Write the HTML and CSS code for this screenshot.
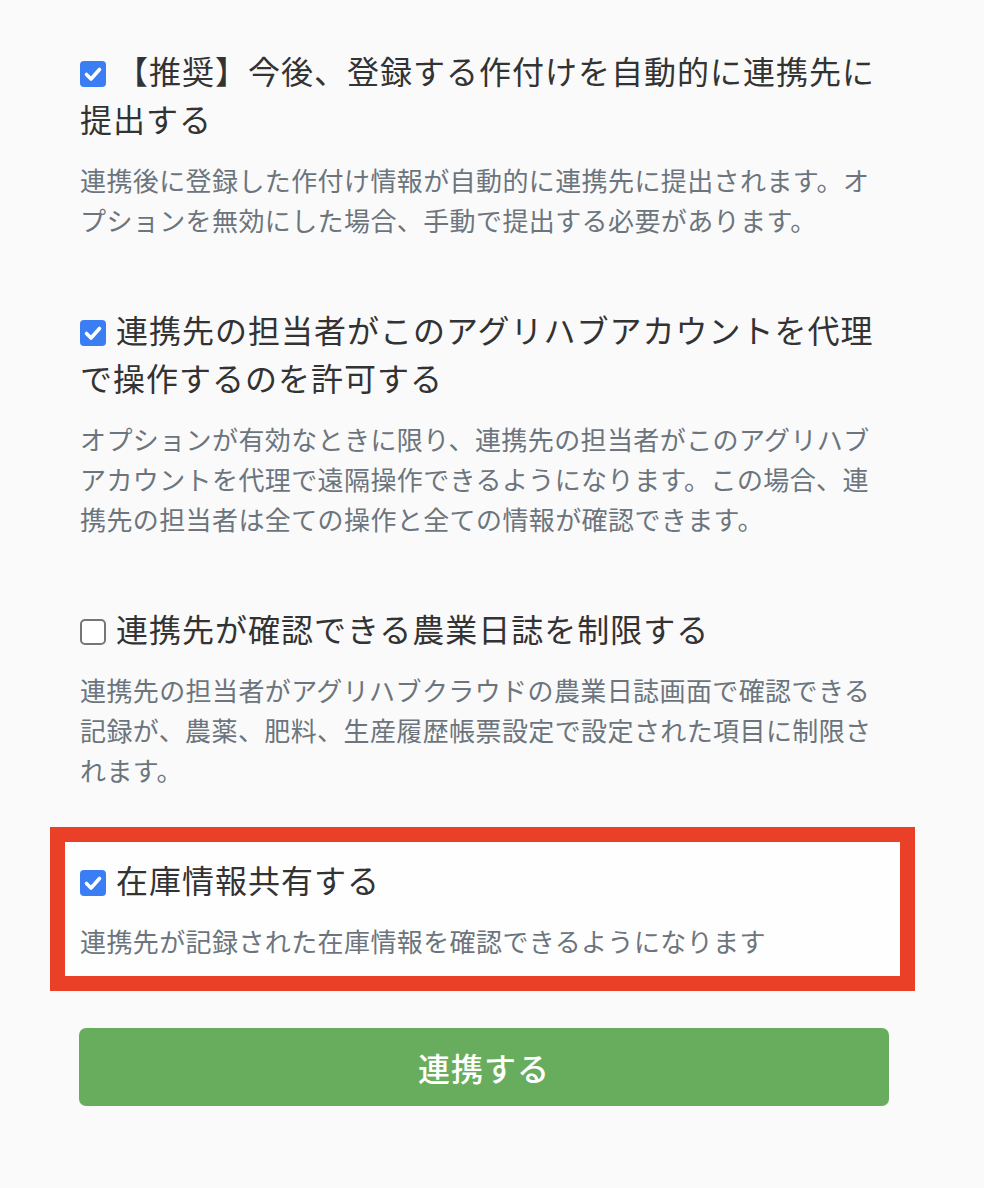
FILE: index.html
```html
<!DOCTYPE html>
<html lang="ja">
<head>
<meta charset="utf-8">
<link rel="stylesheet" href="styles.css">
</head>
<body>
<div class="page">
  <div class="option">
    <label class="title"><span class="cb on"><svg viewBox="0 0 26 26"><path d="M6.5 13.5 L11 18 L19.5 8.5" /></svg></span>【推奨】今後、登録する作付けを自動的に連携先に提出する</label>
    <p class="desc">連携後に登録した作付け情報が自動的に連携先に提出されます。オプションを無効にした場合、手動で提出する必要があります。</p>
  </div>
  <div class="option">
    <label class="title"><span class="cb on"><svg viewBox="0 0 26 26"><path d="M6.5 13.5 L11 18 L19.5 8.5" /></svg></span>連携先の担当者がこのアグリハブアカウントを代理で操作するのを許可する</label>
    <p class="desc">オプションが有効なときに限り、連携先の担当者がこのアグリハブアカウントを代理で遠隔操作できるようになります。この場合、連携先の担当者は全ての操作と全ての情報が確認できます。</p>
  </div>
  <div class="option">
    <label class="title"><span class="cb off"></span>連携先が確認できる農業日誌を制限する</label>
    <p class="desc">連携先の担当者がアグリハブクラウドの農業日誌画面で確認できる記録が、農薬、肥料、生産履歴帳票設定で設定された項目に制限されます。</p>
  </div>
  <div class="option highlight">
    <label class="title"><span class="cb on"><svg viewBox="0 0 26 26"><path d="M6.5 13.5 L11 18 L19.5 8.5" /></svg></span>在庫情報共有する</label>
    <p class="desc">連携先が記録された在庫情報を確認できるようになります</p>
  </div>
  <button class="submit">連携する</button>
</div>
</body>
</html>
```

FILE: styles.css
```css
html, body {
  margin: 0;
  padding: 0;
  background: #fafafa;
}
body {
  font-family: "Noto Sans CJK JP", "Noto Sans", sans-serif;
}
.page {
  width: 810px;
  margin-left: 80px;
  padding-top: 46px;
  display: flex;
  flex-direction: column;
  gap: 65px;
}
.option {
  position: relative;
}
.title {
  display: block;
  font-size: 32px;
  line-height: 48px;
  letter-spacing: 1px;
  color: #333333;
}
.cb {
  display: inline-block;
  width: 26px;
  height: 26px;
  box-sizing: border-box;
  border-radius: 4px;
  margin-right: 10px;
  vertical-align: -3px;
}
.cb svg {
  display: block;
  width: 26px;
  height: 26px;
}
.cb svg path {
  fill: none;
  stroke: #ffffff;
  stroke-width: 3.6;
  stroke-linecap: round;
  stroke-linejoin: round;
}
.cb.on {
  background: #3b7ef4;
}
.cb.off {
  background: #ffffff;
  border: 2px solid #767676;
  border-radius: 5px;
}
.desc {
  margin: 18px 0 0;
  padding-right: 13px;
  font-size: 26px;
  line-height: 40px;
  letter-spacing: 0.4px;
  color: #6c757d;
}
.highlight::before {
  content: "";
  position: absolute;
  top: -28px;
  right: -25px;
  bottom: -30px;
  left: -30px;
  border: 15px solid #e94027;
  background: #fefefe;
  z-index: -1;
}
.highlight {
  z-index: 0;
}
.submit {
  display: block;
  width: 810px;
  height: 78px;
  margin-left: -1px;
  margin-top: 2px;
  border: none;
  border-radius: 7px;
  background: #68ad5d;
  color: #ffffff;
  font-family: "Noto Sans CJK JP", "Noto Sans", sans-serif;
  font-size: 32px;
  font-weight: 500;
  letter-spacing: 1px;
}
```
